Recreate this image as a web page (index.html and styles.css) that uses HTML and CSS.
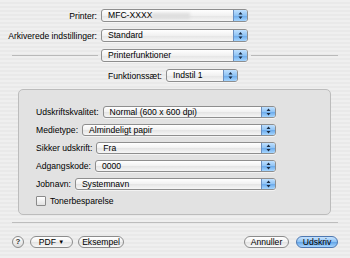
FILE: index.html
```html
<!DOCTYPE html>
<html lang="da">
<head>
  <meta charset="UTF-8">
  <title>Udskriv</title>
  <link rel="stylesheet" href="styles.css">
</head>
<body>
  <div class="dialog">
    <div class="top">
      <div class="row">
        <span class="label">Printer:</span>
        <div class="popup wide"><span class="value">MFC-XXXX</span><span class="smudge"></span><span class="arrows"><svg width="13" height="13" viewBox="0 0 13 13"><path d="M4.5 5.5 L6.5 3 L8.5 5.5 Z M4.5 7.5 L6.5 10 L8.5 7.5 Z" fill="#1a2a40"/></svg></span></div>
      </div>
      <div class="row">
        <span class="label">Arkiverede indstillinger:</span>
        <div class="popup wide"><span class="value">Standard</span><span class="arrows"><svg width="13" height="13" viewBox="0 0 13 13"><path d="M4.5 5.5 L6.5 3 L8.5 5.5 Z M4.5 7.5 L6.5 10 L8.5 7.5 Z" fill="#1a2a40"/></svg></span></div>
      </div>
      <div class="row divider-row">
        <span class="rule left"></span>
        <div class="popup wide"><span class="value">Printerfunktioner</span><span class="arrows"><svg width="13" height="13" viewBox="0 0 13 13"><path d="M4.5 5.5 L6.5 3 L8.5 5.5 Z M4.5 7.5 L6.5 10 L8.5 7.5 Z" fill="#1a2a40"/></svg></span></div>
        <span class="rule right"></span>
      </div>
      <div class="row set-row">
        <span class="label set-label">Funktionssæt:</span>
        <div class="popup small"><span class="value">Indstil 1</span><span class="arrows"><svg width="13" height="13" viewBox="0 0 13 13"><path d="M4.5 5.5 L6.5 3 L8.5 5.5 Z M4.5 7.5 L6.5 10 L8.5 7.5 Z" fill="#1a2a40"/></svg></span></div>
      </div>
    </div>

    <div class="panel">
      <div class="prow">
        <span class="plabel">Udskriftskvalitet:</span>
        <div class="popup grow"><span class="value">Normal (600 x 600 dpi)</span><span class="arrows"><svg width="13" height="12" viewBox="0 0 13 12"><path d="M4.5 5 L6.5 2.5 L8.5 5 Z M4.5 7 L6.5 9.5 L8.5 7 Z" fill="#1a2a40"/></svg></span></div>
      </div>
      <div class="prow">
        <span class="plabel">Medietype:</span>
        <div class="popup grow"><span class="value">Almindeligt papir</span><span class="arrows"><svg width="13" height="12" viewBox="0 0 13 12"><path d="M4.5 5 L6.5 2.5 L8.5 5 Z M4.5 7 L6.5 9.5 L8.5 7 Z" fill="#1a2a40"/></svg></span></div>
      </div>
      <div class="prow">
        <span class="plabel">Sikker udskrift:</span>
        <div class="popup grow"><span class="value">Fra</span><span class="arrows"><svg width="13" height="12" viewBox="0 0 13 12"><path d="M4.5 5 L6.5 2.5 L8.5 5 Z M4.5 7 L6.5 9.5 L8.5 7 Z" fill="#1a2a40"/></svg></span></div>
      </div>
      <div class="prow">
        <span class="plabel">Adgangskode:</span>
        <div class="popup grow"><span class="value">0000</span><span class="arrows"><svg width="13" height="12" viewBox="0 0 13 12"><path d="M4.5 5 L6.5 2.5 L8.5 5 Z M4.5 7 L6.5 9.5 L8.5 7 Z" fill="#1a2a40"/></svg></span></div>
      </div>
      <div class="prow">
        <span class="plabel">Jobnavn:</span>
        <div class="popup grow"><span class="value">Systemnavn</span><span class="arrows"><svg width="13" height="12" viewBox="0 0 13 12"><path d="M4.5 5 L6.5 2.5 L8.5 5 Z M4.5 7 L6.5 9.5 L8.5 7 Z" fill="#1a2a40"/></svg></span></div>
      </div>
      <label class="check-row">
        <span class="checkbox"></span>
        <span>Tonerbesparelse</span>
      </label>
    </div>

    <div class="separator"></div>

    <div class="buttons">
      <span class="help">?</span>
      <span class="btn pdf">PDF <span class="caret">▼</span></span>
      <span class="btn preview">Eksempel</span>
      <span class="spacer"></span>
      <span class="btn cancel">Annuller</span>
      <span class="btn default">Udskriv</span>
    </div>
  </div>
</body>
</html>
```

FILE: styles.css
```css
body {
  margin: 0;
  width: 350px;
  height: 258px;
  overflow: hidden;
  font-family: "Liberation Sans", Arial, sans-serif;
  font-size: 8.6px;
  color: #000;
  background-color: #ececec;
  background-image: repeating-linear-gradient(180deg, #efefef 0, #efefef 2px, #e9e9e9 2px, #e9e9e9 4px);
}

.dialog {
  padding-top: 9px;
}

.top .row {
  display: flex;
  align-items: center;
  height: 13px;
  margin-bottom: 7px;
}

.top .label {
  width: 97px;
  text-align: right;
  margin-right: 4px;
  white-space: nowrap;
}

.popup {
  display: flex;
  align-items: center;
  height: 13px;
  box-sizing: border-box;
  border: 1px solid #8e8e8e;
  border-radius: 3px;
  background: linear-gradient(#ffffff, #f1f1f1 50%, #e4e4e4 51%, #f6f6f6);
  box-shadow: 0 1px 0 rgba(255, 255, 255, 0.6);
  overflow: hidden;
  position: relative;
}

.popup .value {
  flex: 1;
  padding-left: 6px;
  white-space: nowrap;
  line-height: 11px;
}

.popup .arrows {
  width: 13px;
  height: 100%;
  display: flex;
  align-items: center;
  justify-content: center;
  border-left: 1px solid #6a8fc0;
  background: linear-gradient(#bfe0ff, #8fc3f4 50%, #6aa9ea 51%, #a6d6ff);
}

.popup .smudge {
  position: absolute;
  left: 50px;
  top: 3px;
  width: 38px;
  height: 6px;
  background: #dedede;
  filter: blur(1.5px);
}

.wide {
  width: 147px;
}

.small {
  width: 72px;
}

.divider-row .rule {
  height: 1px;
  background: #b9b9b9;
}

.divider-row .rule.left {
  margin-left: 12px;
  width: 86px;
  margin-right: 3px;
}

.divider-row .rule.right {
  margin-left: 3px;
  width: 87px;
}

.top .set-label {
  width: 162px;
}

.panel {
  margin: 6px 0 0 18px;
  width: 313px;
  height: 126px;
  box-sizing: border-box;
  padding: 16px 54px 0 17px;
  border: 1px solid #bcbcbc;
  border-radius: 5px;
  background: #e2e2e2;
}

.prow {
  display: flex;
  align-items: center;
  height: 12px;
  margin-bottom: 6px;
}

.prow .popup {
  height: 12px;
}

.plabel {
  margin-right: 4px;
  white-space: nowrap;
}

.grow {
  flex: 1;
}

.check-row {
  display: flex;
  align-items: center;
  gap: 4px;
  margin-top: 3px;
  height: 9px;
}

.checkbox {
  width: 8px;
  height: 8px;
  border: 1px solid #8a8a8a;
  border-radius: 1px;
  background: linear-gradient(#ffffff, #e2e2e2);
}

.separator {
  margin: 7px 12px 0 12px;
  height: 1px;
  background: #bdbdbd;
}

.buttons {
  display: flex;
  align-items: center;
  margin: 13px 12px 0 12px;
  height: 12px;
}

.help {
  width: 10px;
  height: 10px;
  border: 1px solid #8a8a8a;
  border-radius: 50%;
  background: linear-gradient(#ffffff, #dcdcdc);
  font-size: 8px;
  font-weight: bold;
  line-height: 10px;
  text-align: center;
  color: #333;
  margin-right: 6px;
}

.btn {
  height: 12px;
  box-sizing: border-box;
  border: 1px solid #8c8c8c;
  border-radius: 7px;
  background: linear-gradient(#ffffff, #f1f1f1 50%, #e2e2e2 51%, #f8f8f8);
  line-height: 10px;
  text-align: center;
  white-space: nowrap;
}

.pdf {
  width: 43px;
  margin-right: 5px;
}

.caret {
  font-size: 6px;
  vertical-align: 1px;
}

.preview {
  width: 46px;
}

.spacer {
  flex: 1;
}

.cancel {
  width: 45px;
  margin-right: 7px;
}

.default {
  width: 42px;
  border-color: #4f78b0;
  background: linear-gradient(#c6e3ff, #8ec2f3 50%, #62a3e6 51%, #a9d6ff);
}
```
